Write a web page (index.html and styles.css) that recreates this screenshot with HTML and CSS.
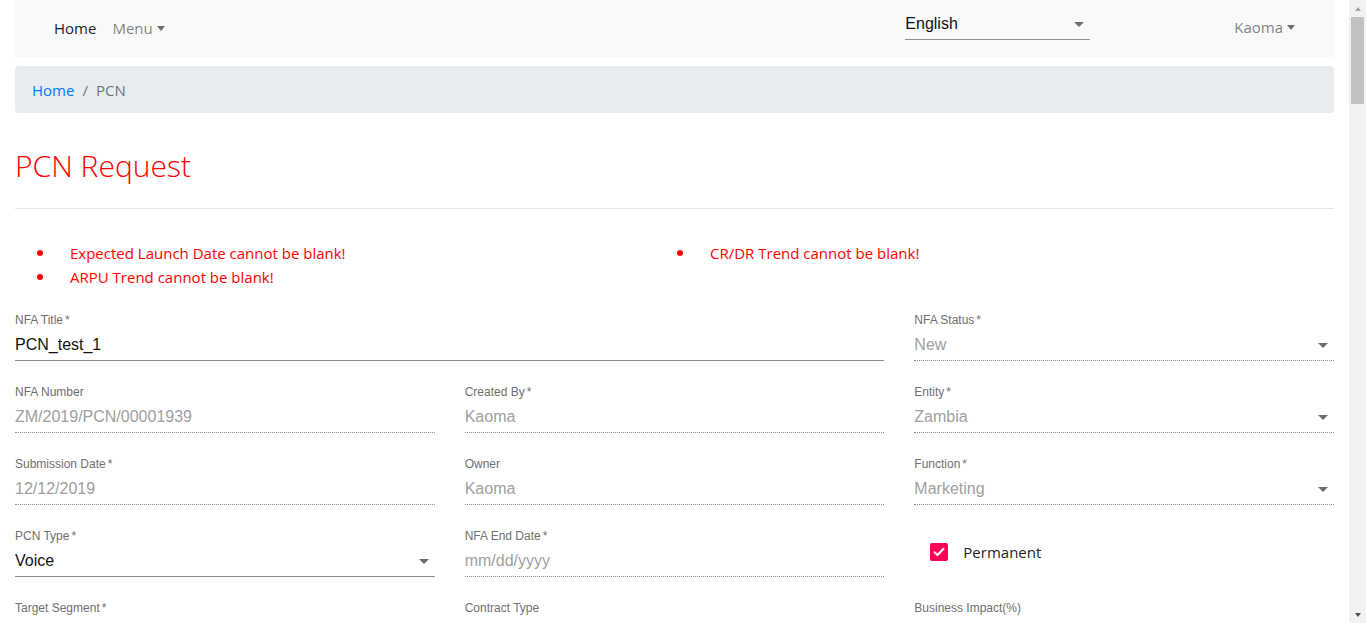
FILE: index.html
```html
<!DOCTYPE html>
<html lang="en">
<head>
<meta charset="utf-8">
<title>PCN Request</title>
<link rel="stylesheet" href="styles.css">
</head>
<body>
<div class="page">
  <nav class="navbar">
    <ul class="nav-left">
      <li class="nav-link active">Home</li>
      <li class="nav-link muted">Menu <span class="caret"></span></li>
    </ul>
    <div class="lang-select">
      <span>English</span>
      <span class="caret dark"></span>
    </div>
    <div class="user-menu">Kaoma <span class="caret"></span></div>
  </nav>

  <ol class="breadcrumb">
    <li class="crumb link">Home</li>
    <li class="crumb sep">/</li>
    <li class="crumb current">PCN</li>
  </ol>

  <h2 class="page-title">PCN Request</h2>
  <hr class="divider">

  <ul class="errors">
    <li class="error"><span class="dot"></span>Expected Launch Date cannot be blank!</li>
    <li class="error"><span class="dot"></span>ARPU Trend cannot be blank!</li>
    <li class="error"><span class="dot"></span>CR/DR Trend cannot be blank!</li>
  </ul>

  <form class="form-grid">
    <div class="field span2">
      <label class="label">NFA Title<span class="req">*</span></label>
      <div class="input solid">PCN_test_1</div>
    </div>
    <div class="field">
      <label class="label">NFA Status<span class="req">*</span></label>
      <div class="input dotted disabled select">New<span class="arrow"></span></div>
    </div>

    <div class="field">
      <label class="label">NFA Number</label>
      <div class="input dotted disabled">ZM/2019/PCN/00001939</div>
    </div>
    <div class="field">
      <label class="label">Created By<span class="req">*</span></label>
      <div class="input dotted disabled">Kaoma</div>
    </div>
    <div class="field">
      <label class="label">Entity<span class="req">*</span></label>
      <div class="input dotted disabled select">Zambia<span class="arrow"></span></div>
    </div>

    <div class="field">
      <label class="label">Submission Date<span class="req">*</span></label>
      <div class="input dotted disabled">12/12/2019</div>
    </div>
    <div class="field">
      <label class="label">Owner</label>
      <div class="input dotted disabled">Kaoma</div>
    </div>
    <div class="field">
      <label class="label">Function<span class="req">*</span></label>
      <div class="input dotted disabled select">Marketing<span class="arrow"></span></div>
    </div>

    <div class="field">
      <label class="label">PCN Type<span class="req">*</span></label>
      <div class="input solid select">Voice<span class="arrow"></span></div>
    </div>
    <div class="field">
      <label class="label">NFA End Date<span class="req">*</span></label>
      <div class="input dotted disabled">mm/dd/yyyy</div>
    </div>
    <div class="field check-field">
      <span class="checkbox">
        <svg width="12" height="10" viewBox="0 0 12 10"><path d="M1.5 5.2 L4.5 8 L10.5 1.8" fill="none" stroke="#fff" stroke-width="2" stroke-linecap="round" stroke-linejoin="round"/></svg>
      </span>
      <span class="check-label">Permanent</span>
    </div>

    <div class="field">
      <label class="label">Target Segment<span class="req">*</span></label>
      <div class="input solid select"><span class="arrow"></span></div>
    </div>
    <div class="field">
      <label class="label">Contract Type</label>
      <div class="input solid select"><span class="arrow"></span></div>
    </div>
    <div class="field">
      <label class="label">Business Impact(%)</label>
      <div class="input solid"></div>
    </div>
  </form>
</div>
<div class="scrollbar" aria-hidden="true">
  <span class="sb-btn"><span class="sb-arrow up"></span></span>
  <span class="sb-track"><span class="sb-thumb"></span></span>
  <span class="sb-btn"><span class="sb-arrow down"></span></span>
</div>
</body>
</html>
```

FILE: styles.css
```css
html, body {
  margin: 0;
  padding: 0;
}
body {
  background: #fff;
  font-family: "Open Sans", "Noto Sans", sans-serif;
  font-size: 15px;
  color: #212529;
  display: flex;
  align-items: flex-start;
  overflow: hidden;
  height: 100vh;
}

/* fake classic scrollbar */
.scrollbar {
  flex: none;
  width: 17px;
  height: 100vh;
  display: flex;
  flex-direction: column;
  background: #f1f1f1;
}
.sb-btn {
  height: 17px;
  display: flex;
  align-items: center;
  justify-content: center;
  flex: none;
}
.sb-arrow {
  width: 0;
  height: 0;
  border-left: 3.5px solid transparent;
  border-right: 3.5px solid transparent;
}
.sb-arrow.up { border-bottom: 4px solid #a3a3a3; }
.sb-arrow.down { border-top: 4px solid #505050; }
.sb-track {
  flex: 1;
  padding: 0 2px;
}
.sb-thumb {
  display: block;
  height: 87px;
  background: #c1c1c1;
}

.page {
  flex: 1;
  min-width: 0;
  padding: 0 15px;
  box-sizing: border-box;
}

/* navbar */
.navbar {
  display: flex;
  align-items: center;
  height: 57px;
  background: #f8f9fa;
  padding: 0 39px 0 31px;
}
.nav-left {
  display: flex;
  list-style: none;
  margin: 0;
  padding: 0;
  position: relative;
  top: -1px;
}
.nav-link {
  padding: 0 8px;
  line-height: 22px;
}
.nav-link.active { color: rgba(0,0,0,.9); }
.nav-link.muted { color: rgba(0,0,0,.5); }
.caret {
  display: inline-block;
  width: 0;
  height: 0;
  border-left: 4.5px solid transparent;
  border-right: 4.5px solid transparent;
  border-top: 5px solid #6f6f6f;
  vertical-align: 3px;
}
.lang-select {
  margin-left: auto;
  margin-right: 2px;
  width: 185px;
  box-sizing: border-box;
  display: flex;
  align-items: center;
  justify-content: space-between;
  padding: 4px 6px 0 0;
  height: 34px;
  border-bottom: 1px solid #8f8f8f;
  font-family: "Liberation Sans", Arial, sans-serif;
  font-size: 16px;
  color: #111;
  position: relative;
  top: -6px;
}
.caret.dark {
  border-left-width: 5.5px;
  border-right-width: 5.5px;
  border-top-width: 5px;
}
.user-menu {
  margin-left: 142px;
  color: rgba(0,0,0,.5);
  line-height: 22px;
  position: relative;
  top: -2px;
}

/* breadcrumb */
.breadcrumb {
  display: flex;
  list-style: none;
  margin: 9px 0 0;
  padding: 13px 17px 11px;
  height: 47px;
  box-sizing: border-box;
  background: #e9ecef;
  border-radius: 4px;
  line-height: 23px;
}
.crumb.link { color: #007bff; }
.crumb.sep { color: #6c757d; padding: 0 8px; }
.crumb.current { color: #6c757d; }

/* heading */
.page-title {
  margin: 34px 0 0;
  font-size: 30px;
  font-weight: 300;
  line-height: 38px;
  color: #ff0000;
}
.divider {
  margin: 23px 0 0;
  border: 0;
  border-top: 1px solid #e5e5e5;
}

/* errors */
.errors {
  list-style: none;
  margin: 32px 0 0;
  padding: 0;
  display: grid;
  grid-template-rows: 24px 24px;
  grid-auto-flow: column;
  grid-template-columns: 640px 1fr;
}
.error {
  display: flex;
  align-items: center;
  color: #ff0000;
  line-height: 24px;
  padding-left: 22px;
}
.dot {
  width: 6px;
  height: 6px;
  border-radius: 50%;
  background: #ff0000;
  margin-right: 27px;
  flex: none;
}

/* form */
.form-grid {
  display: grid;
  grid-template-columns: repeat(3, 1fr);
  column-gap: 30px;
  row-gap: 22px;
  margin-top: 22px;
  font-family: "Liberation Sans", Arial, sans-serif;
}
.span2 { grid-column: span 2; }
.label {
  display: block;
  font-size: 12px;
  line-height: 16px;
  padding-top: 1px;
  color: #6f6f6f;
}
.req { margin-left: 2px; }
.input {
  height: 33px;
  padding-top: 2px;
  box-sizing: border-box;
  display: flex;
  align-items: center;
  justify-content: space-between;
  font-size: 16px;
  color: #111;
}
.input.select > .arrow:only-child { margin-left: auto; }
.input.solid { border-bottom: 1px solid #8c8c8c; }
.input.dotted { border-bottom: 1px dotted #8c8c8c; }
.input.disabled { color: #a0a0a0; }
.arrow {
  width: 0;
  height: 0;
  border-left: 5.5px solid transparent;
  border-right: 5.5px solid transparent;
  border-top: 5px solid #6f6f6f;
  margin-right: 6px;
}
.check-field {
  display: flex;
  align-items: center;
  padding-left: 16px;
  height: 50px;
  box-sizing: border-box;
}
.checkbox {
  width: 18px;
  height: 18px;
  border-radius: 2px;
  background: #ff0059;
  display: flex;
  align-items: center;
  justify-content: center;
  flex: none;
}
.check-label {
  margin-left: 15px;
  font-family: "Open Sans", "Noto Sans", sans-serif;
  font-size: 15px;
  color: #212529;
}
```
